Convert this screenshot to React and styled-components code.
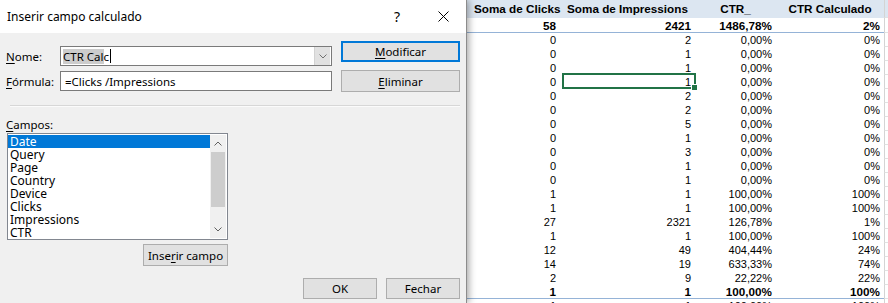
import React from 'react';
import styled, { createGlobalStyle } from 'styled-components';

const GlobalStyle = createGlobalStyle`
  html, body {
    margin: 0;
    padding: 0;
    background: #fff;
  }
  body {
    width: 888px;
    height: 303px;
    overflow: hidden;
  }
`;

const Screen = styled.div`
  display: flex;
  width: 888px;
  height: 303px;
  overflow: hidden;
`;

/* ---------- dialog ---------- */

const Dialog = styled.div`
  position: relative;
  z-index: 2;
  flex: 0 0 467px;
  display: flex;
  flex-direction: column;
  box-sizing: border-box;
  background: #f0f0f0;
  border-right: 1px solid #8c8c8c;
  box-shadow: 2px 0 7px rgba(0, 0, 0, 0.35);
  font-family: 'Segoe UI', 'Noto Sans', sans-serif;
  font-size: 11.5px;
  color: #000;
`;

const TitleBar = styled.div`
  flex: 0 0 33px;
  display: flex;
  align-items: center;
  background: #fff;
  padding-left: 7px;
`;

const Title = styled.span`
  flex: 1;
  font-size: 12px;
`;

const TitleButton = styled.div`
  width: 46px;
  height: 33px;
  display: flex;
  align-items: center;
  justify-content: center;
  font-size: 14px;
`;

const Body = styled.div`
  display: flex;
  flex-direction: column;
  padding: 0 6px;
`;

const TopSection = styled.div`
  display: flex;
`;

const Fields = styled.div`
  display: grid;
  grid-template-columns: 54px 272px;
  row-gap: 3px;
  align-items: center;
  padding-top: 12px;
`;

const Label = styled.label`
  line-height: 15px;
`;

const Key = styled.u`
  text-decoration-thickness: 1px;
  text-underline-offset: 2px;
`;

const TextBox = styled.div`
  display: flex;
  align-items: center;
  height: 20px;
  box-sizing: border-box;
  background: #fff;
  border: 1px solid #7a7a7a;
  padding-left: ${(p) => p.$pad}px;
  white-space: nowrap;
`;

const Selected = styled.span`
  background: #cccccc;
`;

const Caret = styled.span`
  display: inline-block;
  width: 1px;
  height: 14px;
  background: #000;
  margin-left: 1px;
`;

const DropButton = styled.div`
  margin-left: auto;
  margin-right: 1px;
  width: 16px;
  height: 18px;
  box-sizing: border-box;
  display: flex;
  align-items: center;
  justify-content: center;
  background: #e1e1e1;
  border-left: 1px solid #d2d2d2;
`;

const ActionColumn = styled.div`
  display: flex;
  flex-direction: column;
  gap: 8px;
  margin-left: 9px;
  padding-top: 8px;
`;

const Button = styled.div`
  width: ${(p) => p.$w}px;
  height: ${(p) => p.$h || 22}px;
  box-sizing: border-box;
  display: flex;
  align-items: center;
  justify-content: center;
  background: #e1e1e1;
  border: ${(p) => (p.$focused ? '2px solid #0078d7' : '1px solid #adadad')};
`;

const Separator = styled.div`
  margin: 13px 0 0 4px;
  width: 450px;
  height: 1px;
  background: #d7d7d7;
  border-bottom: 1px solid #fbfbfb;
`;

const FieldSection = styled.div`
  display: flex;
  flex-direction: column;
  align-items: flex-end;
  width: 222px;
  margin-top: 10px;
`;

const SectionLabel = styled(Label)`
  align-self: flex-start;
  margin-bottom: 1px;
`;

const ListBox = styled.div`
  display: flex;
  width: 221px;
  height: 107px;
  box-sizing: border-box;
  background: #fff;
  border: 1px solid #828790;
`;

const Items = styled.div`
  flex: 1;
  padding-top: 1px;
`;

const Item = styled.div`
  height: 13px;
  line-height: 13px;
  padding-left: 2px;
  background: ${(p) => (p.$active ? '#0078d7' : 'transparent')};
  color: ${(p) => (p.$active ? '#fff' : '#000')};
  font-size: 12px;
`;

const ScrollBar = styled.div`
  display: flex;
  flex-direction: column;
  width: 16px;
  margin: 1px 1px 1px 0;
  background: #f0f0f0;
`;

const ScrollArrow = styled.div`
  height: 17px;
  display: flex;
  align-items: center;
  justify-content: center;
`;

const Thumb = styled.div`
  height: 55px;
  margin: 0 1px;
  background: #cdcdcd;
`;

const Spacer = styled.div`
  flex: 1;
`;

const InsertRow = styled.div`
  margin-top: 4px;
`;

const Footer = styled.div`
  display: flex;
  justify-content: flex-end;
  gap: 9px;
  margin-top: 12px;
`;

const Chevron = ({ up, color = '#606060' }) => (
  <svg width="8" height="5" viewBox="0 0 8 5">
    <polyline
      points={up ? '0.5,4.5 4,1 7.5,4.5' : '0.5,0.5 4,4 7.5,0.5'}
      fill="none"
      stroke={color}
      strokeWidth="1"
    />
  </svg>
);

const CloseIcon = () => (
  <svg width="11" height="11" viewBox="0 0 11 11">
    <path d="M0.5 0.5 L10.5 10.5 M10.5 0.5 L0.5 10.5" stroke="#000" strokeWidth="1" />
  </svg>
);

const fields = ['Date', 'Query', 'Page', 'Country', 'Device', 'Clicks', 'Impressions', 'CTR'];

/* ---------- pivot sheet ---------- */

const Sheet = styled.div`
  flex: 1;
  display: flex;
  flex-direction: column;
  background: #fff;
  font-family: 'Liberation Sans', Arial, sans-serif;
  font-size: 11px;
  color: #000;
`;

const Row = styled.div`
  display: grid;
  grid-template-columns: 93px 135px 81px 108px 1fr;
  flex: 0 0 ${(p) => p.$h || 14}px;
  height: ${(p) => p.$h || 14}px;
  line-height: ${(p) => p.$h || 14}px;
  box-sizing: border-box;
  background: ${(p) => (p.$head ? '#dce6f1' : '#fff')};
  border-bottom: ${(p) => (p.$line ? '1px solid #95b3d7' : 'none')};
  font-weight: ${(p) => (p.$bold ? 'bold' : 'normal')};
  font-size: ${(p) => (p.$bold ? '11.7px' : '11px')};
`;

const Cell = styled.div`
  position: relative;
  text-align: ${(p) => (p.$center ? 'center' : 'right')};
  padding: ${(p) => (p.$center ? `0 0 0 ${p.$shift || 0}px` : '0 4px 0 0')};
  white-space: nowrap;

  ${(p) =>
    p.$selected &&
    `
    &::after {
      content: '';
      position: absolute;
      top: -2px;
      bottom: 0;
      left: 2px;
      right: -1px;
      border: 2px solid #217346;
    }
    &::before {
      content: '';
      position: absolute;
      right: -3px;
      bottom: -2px;
      width: 5px;
      height: 5px;
      background: #217346;
      border: 1px solid #fff;
      z-index: 1;
    }
  `}
`;

const GridCell = styled.div`
  border-left: 1px solid #d4d4d4;
  border-bottom: 1px solid #e1e1e1;
`;

const rows = [
  ['0', '2', '0,00%', '0%'],
  ['0', '1', '0,00%', '0%'],
  ['0', '1', '0,00%', '0%'],
  ['0', '1', '0,00%', '0%', true],
  ['0', '2', '0,00%', '0%'],
  ['0', '2', '0,00%', '0%'],
  ['0', '5', '0,00%', '0%'],
  ['0', '1', '0,00%', '0%'],
  ['0', '3', '0,00%', '0%'],
  ['0', '1', '0,00%', '0%'],
  ['0', '1', '0,00%', '0%'],
  ['1', '1', '100,00%', '100%'],
  ['1', '1', '100,00%', '100%'],
  ['27', '2321', '126,78%', '1%'],
  ['1', '1', '100,00%', '100%'],
  ['12', '49', '404,44%', '24%'],
  ['14', '19', '633,33%', '74%'],
  ['2', '9', '22,22%', '22%'],
];

const App = () => {
  return (
    <Screen>
      <GlobalStyle />
      <Dialog>
        <TitleBar>
          <Title>Inserir campo calculado</Title>
          <TitleButton>?</TitleButton>
          <TitleButton>
            <CloseIcon />
          </TitleButton>
        </TitleBar>
        <Body>
          <TopSection>
            <Fields>
              <Label>
                <Key>N</Key>ome:
              </Label>
              <TextBox $pad={2}>
                <Selected>CTR Cal</Selected>c<Caret />
                <DropButton>
                  <Chevron color="#707070" />
                </DropButton>
              </TextBox>
              <Label>
                <Key>F</Key>órmula:
              </Label>
              <TextBox $pad={4}>=Clicks /Impressions</TextBox>
            </Fields>
            <ActionColumn>
              <Button $w={119} $h={21} $focused>
                <span>
                  <Key>M</Key>odificar
                </span>
              </Button>
              <Button $w={119} $h={22}>
                <span>
                  <Key>E</Key>liminar
                </span>
              </Button>
            </ActionColumn>
          </TopSection>
          <Separator />
          <FieldSection>
            <SectionLabel>
              <Key>C</Key>ampos:
            </SectionLabel>
            <ListBox>
              <Items>
                {fields.map((f, i) => (
                  <Item key={f} $active={i === 0}>
                    {f}
                  </Item>
                ))}
              </Items>
              <ScrollBar>
                <ScrollArrow>
                  <Chevron up />
                </ScrollArrow>
                <Thumb />
                <Spacer />
                <ScrollArrow>
                  <Chevron />
                </ScrollArrow>
              </ScrollBar>
            </ListBox>
            <InsertRow>
              <Button $w={85} $h={22}>
                <span>
                  Inse<Key>r</Key>ir campo
                </span>
              </Button>
            </InsertRow>
          </FieldSection>
          <Footer>
            <Button $w={74} $h={21}>OK</Button>
            <Button $w={74} $h={21}>Fechar</Button>
          </Footer>
        </Body>
      </Dialog>

      <Sheet>
        <Row $head $bold $h={18}>
          <Cell $center $shift={7}>Soma de Clicks</Cell>
          <Cell $center>Soma de Impressions</Cell>
          <Cell $center>CTR_</Cell>
          <Cell $center>CTR Calculado</Cell>
          <GridCell />
        </Row>
        <Row $bold $line $h={15}>
          <Cell>58</Cell>
          <Cell>2421</Cell>
          <Cell>1486,78%</Cell>
          <Cell>2%</Cell>
          <GridCell />
        </Row>
        {rows.map((r, i) => (
          <Row key={i}>
            <Cell>{r[0]}</Cell>
            <Cell $selected={r[4]}>{r[1]}</Cell>
            <Cell>{r[2]}</Cell>
            <Cell>{r[3]}</Cell>
            <GridCell />
          </Row>
        ))}
        <Row $bold $line>
          <Cell>1</Cell>
          <Cell>1</Cell>
          <Cell>100,00%</Cell>
          <Cell>100%</Cell>
          <GridCell />
        </Row>
        <Row>
          <Cell>1</Cell>
          <Cell>1</Cell>
          <Cell>100,00%</Cell>
          <Cell>100%</Cell>
          <GridCell />
        </Row>
      </Sheet>
    </Screen>
  );
};

export default App;
